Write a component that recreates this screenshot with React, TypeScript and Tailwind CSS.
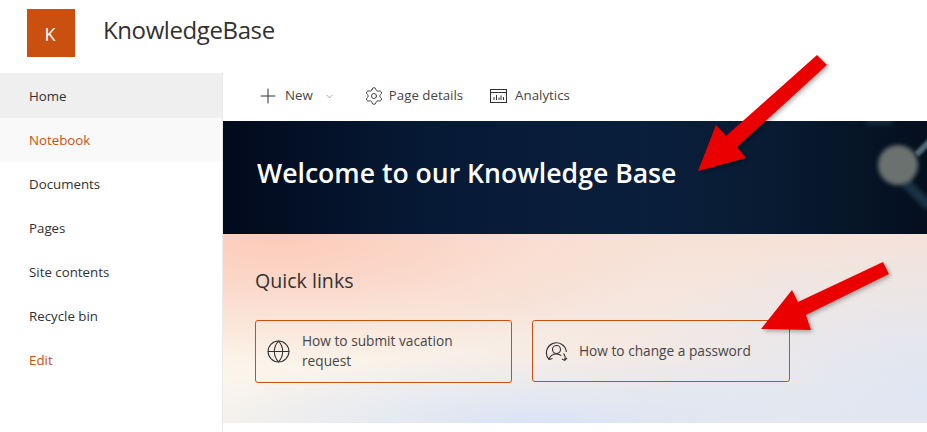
import { ChevronDown, Globe, Plus, Settings } from 'lucide-react'

const navItems = [
  { label: 'Home', className: 'h-[45px] pt-[3px] bg-[#efefef] text-[#323130] font-medium' },
  { label: 'Notebook', className: 'h-11 pt-[1px] bg-[#f9f9f9] text-[#ca5010]' },
  { label: 'Documents', className: 'h-11 pt-[1px] text-[#323130]' },
  { label: 'Pages', className: 'h-11 pt-[1px] text-[#323130]' },
  { label: 'Site contents', className: 'h-11 pt-[1px] text-[#323130]' },
  { label: 'Recycle bin', className: 'h-11 pt-[1px] text-[#323130]' },
  { label: 'Edit', className: 'h-11 pt-[1px] text-[#ca5010]' },
]

function AnalyticsIcon() {
  return (
    <svg width="17" height="14" viewBox="0 0 17 14" fill="none" stroke="#323130" strokeWidth="1">
      <rect x="0.5" y="0.5" width="16" height="13" />
      <path d="M0.5 3.5H16.5M4 11V8M6.5 11V6M9 11V8.5M11 11V6.5M13.5 11V8" />
    </svg>
  )
}

function PasswordIcon() {
  return (
    <svg width="23" height="21" viewBox="0 0 23 21" fill="none" stroke="#323130" strokeWidth="1.1" className="shrink-0">
      <path d="M4 18.5A10 10 0 1 1 21.4 11" />
      <circle cx="11.5" cy="8.5" r="4" />
      <path d="M4 18.5C5 15 8 13 11.5 13C13.5 13 15 13.6 16.3 14.7" />
      <path d="M4 18.5L7.5 17.5M18.5 12.5C20.2 14.5 20.6 16.5 19.8 19M22 17L19.7 19.4L17 18" />
    </svg>
  )
}

function RedArrow({ points }: { points: string }) {
  return <polygon points={points} fill="#ea0606" filter="url(#arrow-shadow)" />
}

export default function App() {
  return (
    <div className="relative h-[432px] w-[927px] overflow-hidden bg-white font-['Open_Sans','Noto_Sans',sans-serif] text-[#323130]">
      {/* Header */}
      <header className="flex h-[73px] items-start pl-[27px] pt-[9px]">
        <div className="flex h-12 w-12 items-center justify-center bg-[#ca5010] pr-0.5 pt-0.5 text-lg text-white">K</div>
        <h1 className="ml-7 mt-[3px] text-[24px] leading-9 tracking-[-0.4px] text-[#323130]">KnowledgeBase</h1>
      </header>

      <div className="flex h-[359px]">
        {/* Sidebar */}
        <nav className="w-[223px] shrink-0 border-r border-[#eaeaea]">
          {navItems.map(item => (
            <div key={item.label} className={`flex items-center pl-[29px] text-[13.3px] ${item.className}`}>
              {item.label}
            </div>
          ))}
        </nav>

        {/* Main */}
        <main className="flex-1">
          <div className="flex h-12 items-center pb-[2px] pl-[33px] text-[13.3px] text-[#484644]">
            <Plus size={24} strokeWidth={1} className="text-[#323130]" />
            <span className="ml-[5px]">New</span>
            <ChevronDown size={11} strokeWidth={1} className="ml-[11px]" />
            <Settings size={20} strokeWidth={1.1} className="ml-[29px] text-[#323130]" />
            <span className="ml-[5px]">Page details</span>
            <span className="ml-[27px]"><AnalyticsIcon /></span>
            <span className="ml-2">Analytics</span>
          </div>

          <section className="relative flex h-[113px] items-center overflow-hidden bg-[linear-gradient(90deg,#020a1c_0%,#061a36_30%,#0a1f3c_60%,#071a30_80%,#050f1e_100%)] pb-[9px] pl-[34px]">
            <div className="absolute left-[642px] top-[-4px] h-2 w-7 rounded-full bg-[#16293a] blur-[2px]" />
            <div className="absolute left-[676px] top-[68px] h-2.5 w-9 rotate-45 bg-[#1a3244] blur-[2px]" />
            <div className="absolute left-[690px] top-[22px] h-1.5 w-6 -rotate-45 bg-[#4f6876] blur-[1px]" />
            <div className="absolute left-[655px] top-[24px] h-10 w-10 rounded-full bg-[#6a716f] blur-[2px]" />
            <h2 className="relative text-[26.6px] font-semibold leading-8 text-white">Welcome to our Knowledge Base</h2>
          </section>

          <section className="h-[189px] bg-[radial-gradient(ellipse_400px_130px_at_8%_0%,#fdcbb9_0%,#fcd9cb99_60%,transparent_100%),radial-gradient(ellipse_400px_70px_at_45%_100%,#d9e4f6_0%,transparent_100%),radial-gradient(ellipse_420px_130px_at_0%_85%,#fcf6ec_0%,#fbf3e9_40%,transparent_100%),radial-gradient(ellipse_320px_170px_at_100%_85%,#dfe6f3_0%,transparent_100%),linear-gradient(180deg,#f7e2d7_0%,#f3eeea_100%)] px-8 pt-[33px]">
            <h3 className="text-[19.6px] font-medium leading-7 text-[#323130]">Quick links</h3>
            <div className="mt-[25px] flex gap-5">
              <a className="flex h-[63px] w-[257px] items-center gap-[11px] rounded-[3px] border border-[#ca5010] pb-0.5 pl-[10px] pr-6 text-[13.7px] font-medium leading-5 text-[#484644]">
                <Globe size={25} strokeWidth={1} className="mt-0.5 shrink-0 text-[#323130]" />
                <span>How to submit vacation request</span>
              </a>
              <a className="flex h-[62px] w-[258px] items-center gap-[11px] self-start rounded-[3px] border border-[#ca5010] pl-3 pr-3 text-[13.7px] font-medium leading-5 text-[#484644]">
                <PasswordIcon />
                <span>How to change a password</span>
              </a>
            </div>
          </section>
        </main>
      </div>

      {/* Annotation arrows drawn over the page */}
      <svg className="absolute left-0 top-0" width="927" height="432">
        <defs>
          <filter id="arrow-shadow" x="-20%" y="-20%" width="140%" height="140%">
            <feDropShadow dx="2" dy="2" stdDeviation="2" floodColor="#000" floodOpacity="0.3" />
          </filter>
        </defs>
        <RedArrow points="817,55 827,65 737,147 746,158 698,171 716,125 726,136" />
        <RedArrow points="883,262 889,274 806,315 811,330 761,329 792,290 798,302" />
      </svg>
    </div>
  )
}
